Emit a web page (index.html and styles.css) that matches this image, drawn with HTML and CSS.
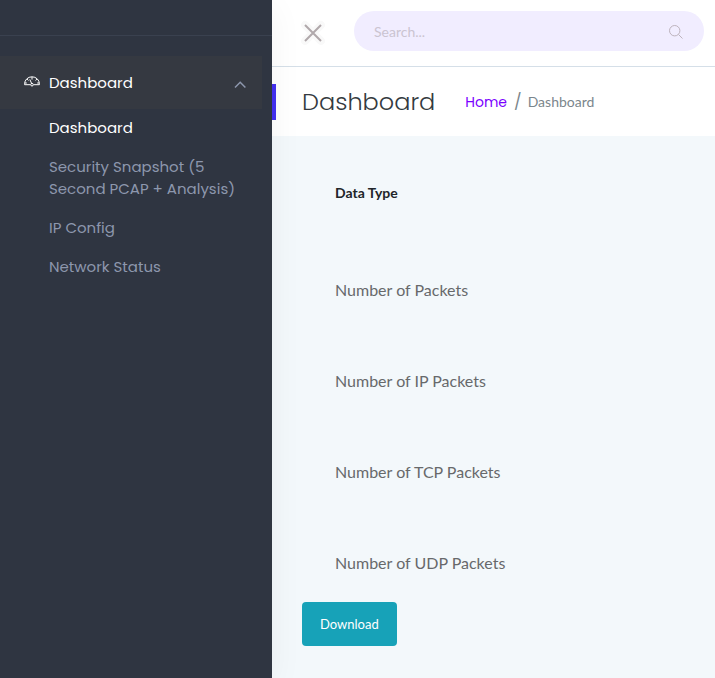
FILE: index.html
```html
<!DOCTYPE html>
<html lang="en">
<head>
<meta charset="utf-8">
<meta name="viewport" content="width=device-width, initial-scale=1">
<title>Dashboard</title>
<link rel="stylesheet" href="styles.css">
</head>
<body>
<div class="layout">
  <aside class="sidebar">
    <div class="brand"></div>
    <nav class="menu" aria-label="Main">
      <button class="menu-group" type="button" aria-expanded="true">
        <svg class="gauge" viewBox="0 0 16 14" aria-hidden="true">
          <path d="M6.4 8.7H.6V7.8a7.4 7 0 0 1 14.8 0v.9H9.6M8 1v2.6M2.9 3l1.5 1.5M13.1 3l-1.5 1.5M.8 7h2M15.2 7h-2M5.8 3.4 7.6 7.4"/>
          <circle cx="8" cy="8.7" r="1.3"/>
        </svg>
        <span class="menu-label">Dashboard</span>
        <svg class="chevron" viewBox="0 0 12 12" aria-hidden="true"><path d="M1 10.5 6.2 5.3l5.2 5.2"/></svg>
      </button>
      <ul class="submenu">
        <li><a class="active" href="#">Dashboard</a></li>
        <li><a href="#">Security Snapshot (5 Second PCAP + Analysis)</a></li>
        <li><a href="#">IP Config</a></li>
        <li><a href="#">Network Status</a></li>
      </ul>
    </nav>
  </aside>
  <div class="page">
    <header class="topbar">
      <button class="close" type="button" aria-label="Close menu">
        <svg viewBox="0 0 24 24" aria-hidden="true"><path class="halo" d="m4 4 16 16M20 4 4 20"/><path d="m4 4 16 16M20 4 4 20"/></svg>
      </button>
      <form class="search">
        <input type="text" placeholder="Search..." aria-label="Search">
        <button type="submit" aria-label="Submit search">
          <svg viewBox="0 0 16 16" aria-hidden="true"><circle cx="6.7" cy="7.7" r="5.2"/><path d="m10.5 11.5 4 4"/></svg>
        </button>
      </form>
    </header>
    <div class="titlebar">
      <h1>Dashboard</h1>
      <nav class="crumbs" aria-label="Breadcrumb">
        <a href="#">Home</a><span class="slash">/</span><span>Dashboard</span>
      </nav>
    </div>
    <main class="content">
      <table class="packets">
        <thead><tr><th scope="col">Data Type</th></tr></thead>
        <tbody>
          <tr><td>Number of Packets</td></tr>
          <tr><td>Number of IP Packets</td></tr>
          <tr><td>Number of TCP Packets</td></tr>
          <tr><td>Number of UDP Packets</td></tr>
        </tbody>
      </table>
      <button class="download" type="button">Download</button>
    </main>
  </div>
</div>
</body>
</html>
```
FILE: styles.css
```css
* { box-sizing: border-box; }

body {
  margin: 0;
  font-family: Lato, "Liberation Sans", sans-serif;
  font-size: 14px;
  color: #212529;
  background: #f3f8fb;
}

button {
  border: 0;
  padding: 0;
  background: none;
  font: inherit;
  color: inherit;
  cursor: pointer;
}

a { text-decoration: none; }

svg {
  display: block;
  fill: none;
  stroke: currentColor;
}

.layout {
  display: flex;
  min-height: 100vh;
}

.sidebar {
  flex: 0 0 272px;
  background: #2f3541;
  box-shadow: 0 8px 32px rgba(0, 0, 0, 0.05);
  font-family: Poppins, Inter, sans-serif;
  font-size: 15px;
  line-height: 22px;
  z-index: 1;
}

.brand {
  height: 36px;
  border-bottom: 1px solid #3a414f;
}

.menu { padding-top: 20px; }

.menu-group {
  display: flex;
  align-items: center;
  width: calc(100% - 10px);
  height: 53px;
  padding: 0 16px 0 24px;
  background: #353941;
  color: #fff;
  text-align: left;
}

.gauge {
  width: 16px;
  height: 14px;
  margin-right: 9px;
}

.menu-label { flex: 1; }

.chevron {
  width: 12px;
  height: 12px;
  color: #8d97ad;
  stroke-width: 1.5;
}

.submenu {
  display: grid;
  gap: 17px;
  margin: 0;
  padding: 8px 32px 0 49px;
  list-style: none;
}

.submenu a {
  display: block;
  color: #8d97ad;
}

.submenu .active { color: #fff; }

.page {
  flex: 1;
  min-width: 0;
}

.topbar {
  display: flex;
  align-items: center;
  gap: 29px;
  height: 67px;
  padding: 0 11px 4px 29px;
  background: #fff;
  border-bottom: 1px solid #d5dfe8;
}

.close {
  color: #b0a8ab;
  padding-top: 4px;
}

.close svg {
  width: 24px;
  height: 24px;
  overflow: visible;
  stroke-width: 2;
}

.close .halo {
  stroke: #f9f9f9;
  stroke-width: 8;
  stroke-linecap: round;
}

.search {
  display: flex;
  align-items: center;
  flex: 1;
  min-width: 0;
  height: 40px;
  padding: 0 20px;
  border-radius: 20px;
  background: #f1edff;
}

.search input {
  flex: 1;
  min-width: 0;
  padding: 0;
  border: 0;
  outline: 0;
  background: none;
  font: inherit;
}

.search input::placeholder { color: #cbc4d1; }

.search button { color: #bdb3bd; }

.search svg {
  width: 16px;
  height: 16px;
}

.titlebar {
  display: flex;
  align-items: center;
  gap: 30px;
  height: 69px;
  padding: 0 30px 0 26px;
  border-left: 4px solid transparent;
  background:
    linear-gradient(#4430f2, #4430f2) 0 17px / 4px 36px no-repeat border-box,
    #fff border-box;
}

h1 {
  margin: 0;
  font-family: Poppins, Inter, sans-serif;
  font-size: 24px;
  font-weight: 300;
  line-height: 36px;
  color: #343a40;
}

.crumbs {
  display: flex;
  align-items: center;
  line-height: 24px;
  color: #7b868c;
}

.crumbs a {
  font-family: Poppins, Inter, sans-serif;
  color: #7a00ff;
}

.slash {
  padding: 0 6px 0 7px;
  font-family: Poppins, Inter, sans-serif;
  font-size: 16px;
}

.content { padding: 11px 30px 31px; }

.packets {
  width: 100%;
  border-collapse: collapse;
  text-align: left;
}

.packets th,
.packets td {
  height: 91px;
  padding: 0 33px;
}

.packets td {
  padding-top: 11px;
  font-size: 16px;
  color: #67696b;
}

.download {
  height: 44px;
  padding: 0 18px;
  border-radius: 4px;
  background: #17a2b8;
  color: #fff;
  font-size: 13px;
}
```
